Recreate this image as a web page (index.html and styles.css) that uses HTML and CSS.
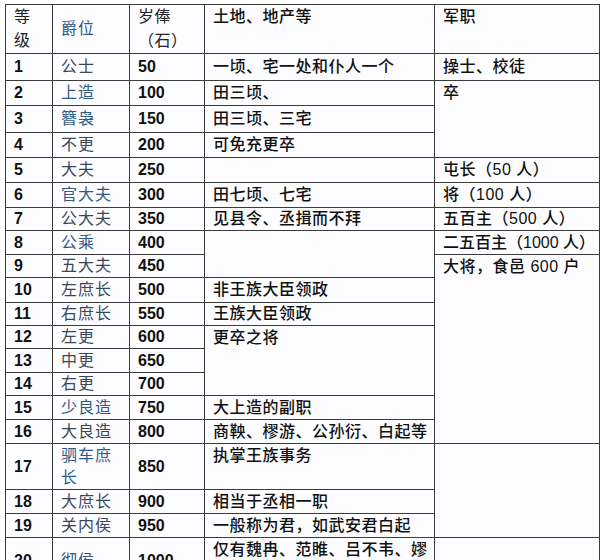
FILE: index.html
```html
<!DOCTYPE html>
<html lang="zh-CN">
<head>
<meta charset="utf-8">
<title>秦爵二十等</title>
<link rel="stylesheet" href="styles.css">
</head>
<body>
<table class="rank">
  <colgroup>
    <col class="c1"><col class="c2"><col class="c3"><col class="c4"><col class="c5">
  </colgroup>
  <tr class="r49">
    <td class="hd">等<br>级</td>
    <td class="title b">爵位</td>
    <td class="hd">岁俸<br>（石）</td>
    <td class="top">土地、地产等</td>
    <td class="top">军职</td>
  </tr>
  <tr class="r27"><td class="num">1</td><td class="title">公士</td><td class="num">50</td><td>一顷、宅一处和仆人一个</td><td>操士、校徒</td></tr>
  <tr class="r25"><td class="num">2</td><td class="title b">上造</td><td class="num">100</td><td>田三顷、</td><td class="top" rowspan="3">卒</td></tr>
  <tr class="r27"><td class="num">3</td><td class="title b">簪袅</td><td class="num">150</td><td>田三顷、三宅</td></tr>
  <tr class="r25"><td class="num">4</td><td class="title">不更</td><td class="num">200</td><td>可免充更卒</td></tr>
  <tr class="r25"><td class="num">5</td><td class="title">大夫</td><td class="num">250</td><td></td><td class="mil">屯长（50 人）</td></tr>
  <tr class="r25"><td class="num">6</td><td class="title b">官大夫</td><td class="num">300</td><td>田七顷、七宅</td><td class="mil">将（100 人）</td></tr>
  <tr class="r23"><td class="num">7</td><td class="title">公大夫</td><td class="num">350</td><td>见县令、丞揖而不拜</td><td class="mil">五百主（500 人）</td></tr>
  <tr class="r24"><td class="num">8</td><td class="title b">公乘</td><td class="num">400</td><td rowspan="2"></td><td class="mil tight">二五百主（1000 人）</td></tr>
  <tr class="r23"><td class="num">9</td><td class="title">五大夫</td><td class="num">450</td><td class="top mil" rowspan="8">大将，食邑 600 户</td></tr>
  <tr class="r25"><td class="num">10</td><td class="title">左庶长</td><td class="num">500</td><td>非王族大臣领政</td></tr>
  <tr class="r23"><td class="num">11</td><td class="title">右庶长</td><td class="num">550</td><td>王族大臣领政</td></tr>
  <tr class="r23"><td class="num">12</td><td class="title">左更</td><td class="num">600</td><td class="top" rowspan="3">更卒之将</td></tr>
  <tr class="r24"><td class="num">13</td><td class="title">中更</td><td class="num">650</td></tr>
  <tr class="r23"><td class="num">14</td><td class="title">右更</td><td class="num">700</td></tr>
  <tr class="r24"><td class="num">15</td><td class="title b">少良造</td><td class="num">750</td><td>大上造的副职</td></tr>
  <tr class="r24"><td class="num">16</td><td class="title">大良造</td><td class="num">800</td><td>商鞅、樛游、公孙衍、白起等</td></tr>
  <tr class="r46"><td class="num">17</td><td class="title b">驷车庶长</td><td class="num">850</td><td class="top">执掌王族事务</td><td rowspan="3"></td></tr>
  <tr class="r24"><td class="num">18</td><td class="title">大庶长</td><td class="num">900</td><td>相当于丞相一职</td></tr>
  <tr class="r24"><td class="num">19</td><td class="title">关内侯</td><td class="num">950</td><td>一般称为君，如武安君白起</td></tr>
  <tr class="r46"><td class="num">20</td><td class="title b">彻侯</td><td class="num">1000</td><td>仅有魏冉、范睢、吕不韦、嫪毐</td><td></td></tr>
</table>
</body>
</html>
```
FILE: styles.css
```css
html {
  background: #ffffff;
}
body {
  margin: 0;
  padding: 4px 0 0 5px;
  background: #ffffff;
  font-family: "Liberation Sans", "Noto Sans CJK SC", sans-serif;
  font-size: 16px;
  color: #111111;
  overflow: hidden;
}
.rank {
  border-collapse: collapse;
  table-layout: fixed;
  width: 594px;
  background: #fdfdff;
}
.c1 { width: 47px; }
.c2 { width: 77px; }
.c3 { width: 75px; }
.c4 { width: 230px; }
.c5 { width: 165px; }
.rank td {
  border: 1px solid #3c3c3c;
  padding: 0 3px 0 8px;
  line-height: 22px;
  vertical-align: middle;
  letter-spacing: 0.5px;
  font-weight: 500;
  overflow: hidden;
}
.rank td.top {
  vertical-align: top;
  padding-top: 1px;
}
.rank td.mil {
  letter-spacing: 0.5px;
  white-space: nowrap;
}
.rank td.mil.tight {
  letter-spacing: 0;
  padding-right: 0;
}
.rank td.num {
  font-size: 16px;
  font-weight: bold;
  letter-spacing: 0;
  color: #111;
}
.rank td.hd {
  line-height: 24px;
  color: #222;
  font-weight: 400;
}
.rank td.title {
  color: #3a4756;
  letter-spacing: 1px;
  font-weight: 400;
}
.rank td.title.b {
  color: #2f5a86;
}
.r23 { height: 23px; }
.r24 { height: 24px; }
.r25 { height: 25px; }
.r27 { height: 27px; }
.r46 { height: 46px; }
.r49 { height: 49px; }
```
